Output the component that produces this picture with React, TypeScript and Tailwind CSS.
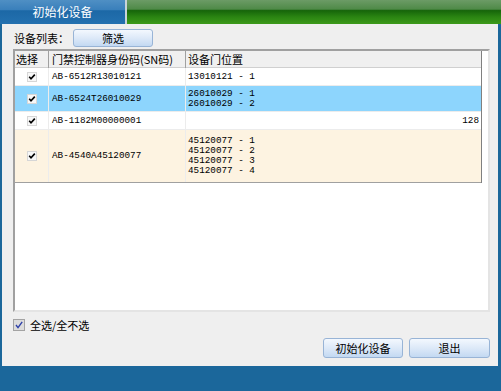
import React from 'react';

const cjk = { fontFamily: '"Noto Sans CJK SC", "Liberation Sans", sans-serif' };
const mono = { fontFamily: '"Liberation Mono", "Noto Sans CJK SC", monospace' };

type Row = { sn: string; doors: string[]; extra?: string; bg: string; h: string };

const rows: Row[] = [
  { sn: 'AB-6512R13010121', doors: ['13010121 - 1'], bg: 'bg-white', h: 'h-[18px]' },
  { sn: 'AB-6524T26010029', doors: ['26010029 - 1', '26010029 - 2'], bg: 'bg-[#8dd5fd]', h: 'h-[26px]' },
  { sn: 'AB-1182M00000001', doors: [], extra: '128', bg: 'bg-white', h: 'h-[18px]' },
  {
    sn: 'AB-4540A45120077',
    doors: ['45120077 - 1', '45120077 - 2', '45120077 - 3', '45120077 - 4'],
    bg: 'bg-[#fdf3e1]',
    h: 'h-[53px]',
  },
];

function CellCheck() {
  return (
    <svg width="10" height="10" viewBox="0 0 10 10">
      <rect x="0.5" y="0.5" width="9" height="9" fill="#f7f7f7" stroke="#d6d6d6" />
      <path d="M2.2 4.8 L4 6.8 L7.8 2.6" fill="none" stroke="#000" strokeWidth="1.6" />
    </svg>
  );
}

function Btn({ label, size }: { label: string; size: string }) {
  return (
    <button
      className={`${size} rounded-[3px] border border-[#98b4d6] bg-gradient-to-b from-[#f3f8fe] via-[#dde9f8] to-[#c3d9f2] text-[11px] leading-none text-black`}
      style={cjk}
    >
      {label}
    </button>
  );
}

export default function App() {
  return (
    <div className="w-[501px] h-[391px] flex flex-col bg-[#1b679b] overflow-hidden">
      {/* Title bar */}
      <div className="h-[24px] flex shrink-0">
        <div
          className="w-[125px] flex items-center justify-center text-white text-[12px] bg-[linear-gradient(to_bottom,#4f8fc4_0%,#3a80bb_40%,#1c68a6_45%,#2471b0_100%)]"
          style={cjk}
        >
          初始化设备
        </div>
        <div className="w-[2px] bg-[#c9d3d9]" />
        <div className="flex-1 bg-[linear-gradient(to_bottom,#6c9b66_0%,#4f8a48_38%,#16650a_44%,#2a8412_70%,#3c9a1a_100%)]" />
      </div>

      {/* Body */}
      <div className="h-[342px] ml-[2px] mr-[3px] bg-[#efefef] flex flex-col pl-[11px] pr-[8px] pt-[5px]">
        <div className="h-[18px] flex items-center">
          <span className="w-[60px] pl-[1px] text-[11px] text-black" style={cjk}>
            设备列表：
          </span>
          <Btn label="筛选" size="w-[80px] h-[18px]" />
        </div>

        {/* List */}
        <div className="mt-[2px] h-[263px] border-2 border-t-[#a0a0a0] border-l-[#a0a0a0] border-r-[#e4e4e4] border-b-[#e4e4e4] bg-white">
          <div className="w-[467px] border-r border-[#808080]">
            <div className="grid grid-cols-[34px_137px_296px] h-[17px] bg-[#f0f0f0] border-b border-[#d0d0d0] text-[11px] text-black" style={cjk}>
              <div className="pl-[1px] border-r border-[#a0a0a0] flex items-center">选择</div>
              <div className="pl-[3px] border-r border-[#a0a0a0] flex items-center">门禁控制器身份码(SN码)</div>
              <div className="pl-[2px] flex items-center">设备门位置</div>
            </div>
            {rows.map((r, i) => (
              <div
                key={i}
                className={`grid grid-cols-[34px_137px_296px] ${r.h} ${r.bg} border-b ${i === rows.length - 1 ? 'border-[#a0a0a0]' : 'border-[#ececec]'} text-[9.3px] text-black`}
                style={mono}
              >
                <div className="flex items-center justify-center pl-[1px] border-r border-[#ececec]">
                  <CellCheck />
                </div>
                <div className="flex items-center pl-[3px] border-r border-[#ececec]">{r.sn}</div>
                <div className="flex items-center justify-between pl-[2px] pr-[3px]">
                  <div className="flex flex-col leading-[10px]">
                    {r.doors.map((d) => (
                      <span key={d}>{d}</span>
                    ))}
                  </div>
                  {r.extra && <span>{r.extra}</span>}
                </div>
              </div>
            ))}
          </div>
        </div>

        {/* Select all */}
        <div className="mt-[7px] h-[12px] flex items-center gap-[5px]">
          <svg width="12" height="12" viewBox="0 0 12 12">
            <rect x="0.5" y="0.5" width="11" height="11" fill="#dcdcdc" stroke="#a3a3a3" />
            <path d="M3 6 L5 8.6 L9.2 2.8" fill="none" stroke="#2d3fa8" strokeWidth="1.4" />
          </svg>
          <span className="text-[11px] text-black" style={cjk}>
            全选/全不选
          </span>
        </div>

        {/* Actions */}
        <div className="mt-[7px] flex justify-end gap-[6px]">
          <Btn label="初始化设备" size="w-[80px] h-[20px]" />
          <Btn label="退出" size="w-[81px] h-[20px]" />
        </div>
      </div>
    </div>
  );
}
